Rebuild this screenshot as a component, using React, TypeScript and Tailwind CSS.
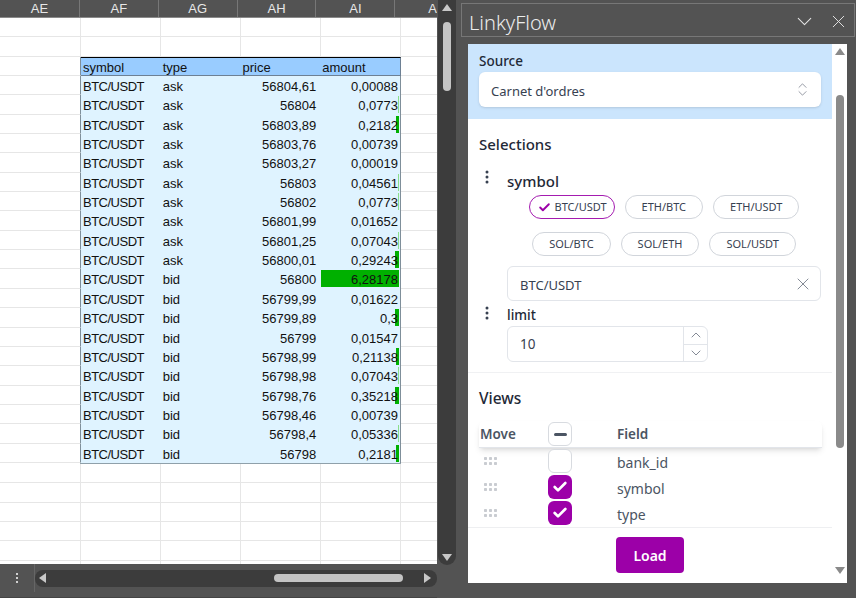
import { Check, ChevronDown, ChevronUp, ChevronsUpDown, X } from "lucide-react";

const rows: [string, string, string][] = [
  ["ask", "56804,61", "0,00088"],
  ["ask", "56804", "0,0773"],
  ["ask", "56803,89", "0,2182"],
  ["ask", "56803,76", "0,00739"],
  ["ask", "56803,27", "0,00019"],
  ["ask", "56803", "0,04561"],
  ["ask", "56802", "0,0773"],
  ["ask", "56801,99", "0,01652"],
  ["ask", "56801,25", "0,07043"],
  ["ask", "56800,01", "0,29243"],
  ["bid", "56800", "6,28178"],
  ["bid", "56799,99", "0,01622"],
  ["bid", "56799,89", "0,3"],
  ["bid", "56799", "0,01547"],
  ["bid", "56798,99", "0,21138"],
  ["bid", "56798,98", "0,07043"],
  ["bid", "56798,76", "0,35218"],
  ["bid", "56798,46", "0,00739"],
  ["bid", "56798,4", "0,05336"],
  ["bid", "56798", "0,2181"],
];

const columns = ["AF", "AG", "AH", "AI"];
const chipsTop = ["ETH/BTC", "ETH/USDT"];
const chipsBottom = ["SOL/BTC", "SOL/ETH", "SOL/USDT"];

function EmptyRow() {
  return (
    <div className="flex h-[19.35px] shrink-0 border-b border-[#e6e6e6]">
      <div className="w-[81px] border-r border-[#e6e6e6]" />
      <div className="w-20 border-r border-[#e6e6e6]" />
      <div className="w-20 border-r border-[#e6e6e6]" />
      <div className="w-20 border-r border-[#e6e6e6]" />
      <div className="w-20 border-r border-[#e6e6e6]" />
    </div>
  );
}

function DataRow({ type, price, amount }: { type: string; price: string; amount: string }) {
  const barWidth = (parseFloat(amount.replace(",", ".")) / 6.28178) * 78;
  return (
    <div className="flex h-[19.35px] shrink-0">
      <div className="w-[81px] border-r border-b border-[#e6e6e6] border-r-[#7f8f9a]" />
      <div className="flex w-80 border-r border-[#7f8f9a] bg-[#dff3ff] leading-[22px] text-[#111]">
        <div className="w-20 pl-[2px] tracking-[-0.5px]">BTC/USDT</div>
        <div className="w-20 pl-[2px]">{type}</div>
        <div className="w-20 pr-[4px] text-right">{price}</div>
        <div className="relative w-20 pr-[2px] text-right">
          {barWidth >= 1.5 && (
            <div
              className="absolute right-[1px] top-[1px] h-[17px] bg-[#00b000]"
              style={{ width: barWidth }}
            />
          )}
          {barWidth >= 0.5 && barWidth < 1.5 && (
            <div className="absolute right-[1px] top-[1px] h-[17px] w-px bg-[#8adf8a]" />
          )}
          <span className="relative">{amount}</span>
        </div>
      </div>
      <div className="flex-1 border-b border-[#e6e6e6]" />
    </div>
  );
}

function Grip() {
  return (
    <svg width="14" height="8" viewBox="0 0 14 8" className="fill-[#c9ccd1]">
      {[0, 5, 10].map((x) =>
        [0, 5].map((y) => <rect key={`${x}-${y}`} x={x} y={y} width="3" height="3" rx="0.7" />)
      )}
    </svg>
  );
}

function Kebab() {
  return (
    <svg width="4" height="14" viewBox="0 0 4 14" className="fill-[#374151]">
      <circle cx="2" cy="2" r="1.5" />
      <circle cx="2" cy="7" r="1.5" />
      <circle cx="2" cy="12" r="1.5" />
    </svg>
  );
}

function Chip({ label }: { label: string }) {
  return (
    <div className="flex h-6 items-center rounded-full border border-[#d1d5db] px-4 text-[11px] text-[#374151]">
      {label}
    </div>
  );
}

function Triangle({ dir }: { dir: "up" | "down" | "left" | "right" }) {
  const points = {
    up: "0,8 5,1 10,8",
    down: "0,1 10,1 5,8",
    left: "8,0 8,10 1,5",
    right: "1,0 1,10 8,5",
  }[dir];
  return (
    <svg width="10" height="10" viewBox="0 0 10 10" className="fill-current">
      <polygon points={points} />
    </svg>
  );
}

function ViewRow({ name, checked }: { name: string; checked: boolean }) {
  return (
    <div className="flex h-[26px] shrink-0 items-center">
      <div className="flex w-[69px] justify-start pl-[5px]">
        <Grip />
      </div>
      <div
        className={
          checked
            ? "flex size-6 items-center justify-center rounded-md bg-[#9c00a8] text-white"
            : "size-6 rounded-md border border-[#d8dbe0] bg-white"
        }
      >
        {checked && <Check size={16} strokeWidth={4} />}
      </div>
      <div className="ml-[45px] pt-1 text-sm text-[#4b5563]">{name}</div>
    </div>
  );
}

export default function App() {
  return (
    <div className="flex h-[598px] w-[856px] overflow-hidden bg-[#535353] font-['Noto_Sans',sans-serif]">
      <div className="flex w-[437px] shrink-0 flex-col">
        <div className="flex h-[18px] shrink-0 overflow-hidden border-b border-[#8a8a8a] bg-[#535353] font-['Liberation_Sans',sans-serif] text-[13px] leading-[18px] text-[#e8e8e8]">
          <div className="w-[81px] border-r border-[#777] text-center">AE</div>
          {columns.map((c) => (
            <div key={c} className="w-20 border-r border-[#777] text-center">
              {c}
            </div>
          ))}
          <div className="flex-1 pl-[33px]">A</div>
        </div>
        <div className="flex h-[546px] shrink-0 flex-col overflow-hidden bg-white font-['Liberation_Sans',sans-serif] text-[13px]">
          <EmptyRow />
          <EmptyRow />
          <div className="flex h-[19.35px] shrink-0">
            <div className="w-[81px] border-r border-b border-[#e6e6e6] border-r-[#7f8f9a]" />
            <div className="flex w-80 border-r border-t border-b border-[#6d8094] border-t-black bg-[#99ccff] leading-[19px] text-[#111]">
              <div className="w-20 pl-[2px]">symbol</div>
              <div className="w-20 pl-[2px]">type</div>
              <div className="w-20 pl-[2px]">price</div>
              <div className="w-20 pl-[2px]">amount</div>
            </div>
            <div className="flex-1 border-b border-[#e6e6e6]" />
          </div>
          {rows.map((r) => (
            <DataRow key={r[1] + r[2]} type={r[0]} price={r[1]} amount={r[2]} />
          ))}
          <div className="ml-20 h-px w-[321px] shrink-0 bg-[#8fa0aa]" />
          {Array.from({ length: 6 }).map((_, i) => (
            <EmptyRow key={i} />
          ))}
        </div>
        <div className="flex flex-1 items-center border-b border-[#444] pb-[5px]">
          <div className="flex w-[35px] shrink-0 flex-col items-center justify-center gap-[2px] self-stretch border-r border-[#666]">
            <span className="size-[2px] bg-[#d0d0d0]" />
            <span className="size-[2px] bg-[#d0d0d0]" />
            <span className="size-[2px] bg-[#d0d0d0]" />
          </div>
          <div className="flex h-[17px] flex-1 items-center rounded-lg bg-[#3c3c3c] pl-[3px] text-[#c8c8c8]">
            <Triangle dir="left" />
            <div className="ml-[226px] h-2 w-[129px] rounded-full bg-[#c4c4c4]" />
            <div className="ml-5">
              <Triangle dir="right" />
            </div>
          </div>
        </div>
      </div>

      <div className="ml-px flex h-[565px] w-[18px] shrink-0 flex-col items-center rounded-b-xl bg-[#3c3c3c] pt-[3px] text-[#c8c8c8]">
        <Triangle dir="up" />
        <div className="mt-[9px] h-[69px] w-2 rounded-full bg-[#c4c4c4]" />
        <div className="mt-[462px]">
          <Triangle dir="down" />
        </div>
      </div>

      <div className="flex min-w-0 flex-1 flex-col pl-[5px] pt-[3px]">
        <div className="flex h-[34px] w-[394px] shrink-0 items-center justify-between border border-[#777] pl-[7px] pr-[5px]">
          <span className="pt-[6px] text-xl font-light leading-none text-[#ececec]">LinkyFlow</span>
          <div className="flex items-center gap-[11px] pt-[3px] text-[#e4e4e4]">
            <ChevronDown size={25} strokeWidth={1} />
            <X size={21} strokeWidth={1.1} />
          </div>
        </div>

        <div className="ml-[7px] mt-[7px] flex h-[539px] w-[379px] bg-white">
          <div className="flex min-w-0 flex-1 flex-col">
            <div className="flex h-[483px] flex-col overflow-hidden">
              <div className="flex h-[75px] shrink-0 flex-col bg-[#cbe5fd] pl-[11px] pr-[11px] pt-[7px]">
                <span className="text-[13.5px] font-medium leading-5 text-[#1f2937]">Source</span>
                <div className="mt-[1px] flex h-[35px] items-center justify-between rounded-md bg-white pl-3 pr-[10px] shadow-sm">
                  <span className="pt-1 text-[13px] text-[#374151]">Carnet d'ordres</span>
                  <ChevronsUpDown size={17} strokeWidth={1} className="text-[#6b7280]" />
                </div>
              </div>

              <div className="flex flex-col pl-[11px] pr-[11px]">
                <span className="mt-[14px] text-[15px] font-medium leading-[22px] text-[#1f2937]">Selections</span>

                <div className="mt-[14px] flex items-start">
                  <div className="ml-[6px] w-[22px] shrink-0 pt-[1px]">
                    <Kebab />
                  </div>
                  <div className="flex flex-1 flex-col">
                    <span className="pt-[2px] text-[15px] font-medium leading-[20px] text-[#1f2937]">symbol</span>
                    <div className="mt-[4px] flex justify-center gap-[10px]">
                      <div className="flex h-6 items-center gap-[4px] rounded-full border border-[#a41bb0] pl-2 pr-[7px] text-[11px] text-[#374151]">
                        <Check size={13} strokeWidth={3.5} className="text-[#9c00a8]" />
                        BTC/USDT
                      </div>
                      {chipsTop.map((c) => (
                        <Chip key={c} label={c} />
                      ))}
                    </div>
                    <div className="mt-[13px] flex justify-center gap-[10px]">
                      {chipsBottom.map((c) => (
                        <Chip key={c} label={c} />
                      ))}
                    </div>
                    <div className="mt-[10px] flex h-[35px] items-center justify-between rounded-md border border-[#e2e5ea] pl-3 pr-[7px]">
                      <span className="pt-1 text-[13px] text-[#374151]">BTC/USDT</span>
                      <X size={20} strokeWidth={1} className="text-[#6b7280]" />
                    </div>
                  </div>
                </div>

                <div className="mt-[5px] flex items-start">
                  <div className="ml-[6px] w-[22px] shrink-0">
                    <Kebab />
                  </div>
                  <div className="flex flex-col">
                    <span className="text-[13.5px] font-medium leading-[19px] text-[#1f2937]">limit</span>
                    <div className="mt-[1px] flex h-9 w-[201px] rounded-md border border-[#e2e5ea]">
                      <div className="flex flex-1 items-center pl-3 text-[13.5px] text-[#374151]">10</div>
                      <div className="flex w-6 flex-col border-l border-[#e2e5ea] text-[#6b7280]">
                        <div className="flex flex-1 items-center justify-center border-b border-[#e2e5ea]">
                          <ChevronUp size={16} strokeWidth={1.25} />
                        </div>
                        <div className="flex flex-1 items-center justify-center">
                          <ChevronDown size={16} strokeWidth={1.25} />
                        </div>
                      </div>
                    </div>
                  </div>
                </div>
              </div>

              <div className="mt-[10px] h-px shrink-0 bg-[#f0f1f3]" />

              <div className="flex flex-col pl-[11px] pr-[10px]">
                <span className="mt-[14px] text-[15.5px] font-medium leading-[22px] text-[#1f2937]">Views</span>
                <div className="mt-3 flex h-[27px] shrink-0 items-center rounded-t-md border-b border-[#e2e5ea] shadow-md">
                  <span className="w-[69px] pl-px text-[13.5px] font-semibold text-[#4b5563]">Move</span>
                  <div className="flex size-6 items-center justify-center rounded-md border border-[#d8dbe0]">
                    <span className="h-[3px] w-[13px] rounded-full bg-[#4b5563]" />
                  </div>
                  <span className="ml-[45px] text-[13.5px] font-semibold text-[#4b5563]">Field</span>
                </div>
                <ViewRow name="bank_id" checked={false} />
                <ViewRow name="symbol" checked={true} />
                <ViewRow name="type" checked={true} />
              </div>
            </div>
            <div className="flex flex-1 justify-center border-t border-[#eeeff1] pt-[9px]">
              <div className="flex h-9 w-[68px] items-center justify-center rounded-[4px] bg-[#9c00a8] pt-px text-sm font-semibold text-white">
                Load
              </div>
            </div>
          </div>

          <div className="flex w-[15px] shrink-0 flex-col items-center pt-[3px] text-[#8a8a8a]">
            <Triangle dir="up" />
            <div className="mt-[38px] h-[353px] w-2 rounded-full bg-[#8a8a8a]" />
            <div className="mt-[118px]">
              <Triangle dir="down" />
            </div>
          </div>
        </div>
      </div>
    </div>
  );
}
